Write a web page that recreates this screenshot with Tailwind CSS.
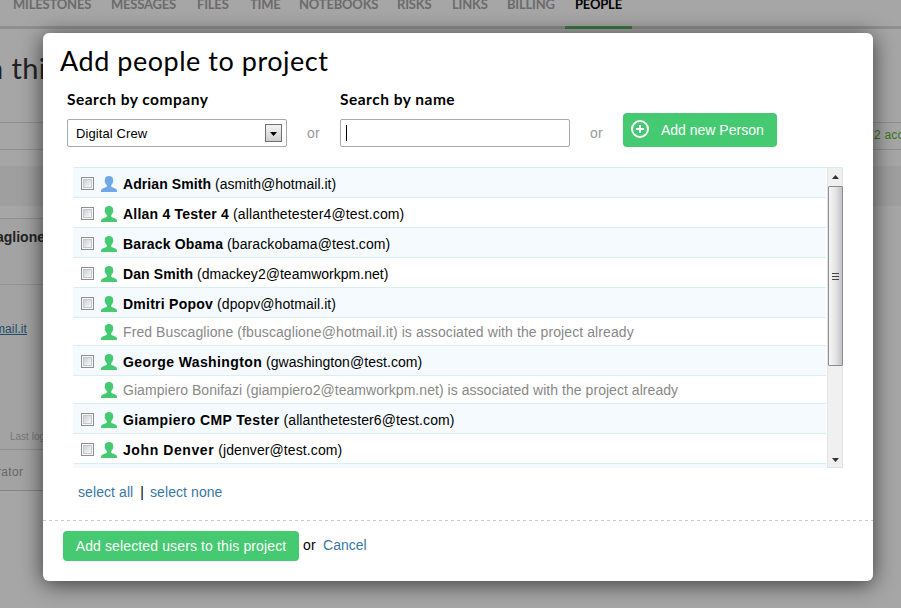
<!DOCTYPE html>
<html lang="en">
<head>
<meta charset="utf-8">
<title>Add people to project</title>
<script src="https://cdn.jsdelivr.net/npm/@tailwindcss/browser@4"></script>
</head>
<body class="relative h-[608px] w-[901px] overflow-hidden bg-[#a6a6a6] font-['Liberation_Sans',sans-serif] text-black">

<!-- Page behind the dialog -->
<div class="h-full w-full overflow-hidden">
  <nav class="flex h-[29px] border-b-[3px] border-[#8f8f8f] pl-[13px] font-['Lato',sans-serif] text-[13px] font-bold leading-[16px] tracking-[-0.2px] text-[#6b6b6b]">
    <span class="-mt-1 w-[98px] whitespace-nowrap">MILESTONES</span>
    <span class="-mt-1 w-[86px] whitespace-nowrap">MESSAGES</span>
    <span class="-mt-1 w-[53px] whitespace-nowrap">FILES</span>
    <span class="-mt-1 w-[49px] whitespace-nowrap">TIME</span>
    <span class="-mt-1 w-[98px] whitespace-nowrap">NOTEBOOKS</span>
    <span class="-mt-1 w-[55px] whitespace-nowrap">RISKS</span>
    <span class="-mt-1 w-[55px] whitespace-nowrap">LINKS</span>
    <span class="-mt-1 w-[58px] whitespace-nowrap">BILLING</span>
    <div class="h-[29px] w-[67px] border-b-[3px] border-[#3e7842] pl-[10px] text-black"><span class="-mt-1 block">PEOPLE</span></div>
  </nav>
  <div class="flex h-[93px] pt-[21px]">
    <div class="-ml-[13px] whitespace-nowrap font-['Lato',sans-serif] text-[29px] leading-[36px] tracking-[0.4px] text-[#222]">n this project</div>
  </div>
  <div class="h-[28px] border-y border-[#8f8f8f]"></div>
  <div class="h-[16px]"></div>
  <div class="h-[40px] bg-[#9f9f9f]"></div>
  <div class="mt-[12px] h-[273px] w-[300px] overflow-hidden border-y border-[#8f8f8f] border-b-[#858585] bg-[#a3a3a3]">
    <div class="h-[66px] border-b border-[#929292] pt-[10px]"><div class="-ml-[4px] text-[14px] font-bold leading-[16px] text-[#222]">aglione</div></div>
    <div class="flex h-[165px] flex-col justify-between border-b border-[#8f8f8f] pb-[6px] pt-[37px]">
      <div class="-ml-[5px] text-[12px] leading-[15px] tracking-[0.1px] text-[#1f4a68] underline">mail.it</div>
      <div class="ml-[10px] text-[10px] leading-[12px] text-[#777]">Last login</div>
    </div>
    <div class="-ml-[3px] pt-[15px] text-[12px] leading-[15px] tracking-[0.3px] text-[#666]">rator</div>
  </div>
</div>
<div class="absolute left-[874px] top-[128px] whitespace-nowrap text-[12px] leading-[15px] tracking-[0.2px] text-[#3b7420]">2 accounts</div>

<!-- Dialog -->
<main class="absolute left-[43px] top-[33px] flex h-[548px] w-[830px] flex-col rounded-[6px] bg-white shadow-[0_3px_22px_rgba(0,0,0,0.65)]">
  <h1 class="ml-[17px] mt-[11px] h-[35px] whitespace-nowrap font-['Lato',sans-serif] text-[27px] leading-[34px] tracking-[0.53px]">Add people to project</h1>
  <div class="flex h-[68px] pl-[24px] pt-[12px]">
    <div class="w-[220px]">
      <div class="-mt-px h-[29px] whitespace-nowrap font-['Lato',sans-serif] text-[15.5px] font-bold leading-[18px] tracking-[0.5px]">Search by company</div>
      <div class="flex h-[28px] items-center justify-between rounded-[2px] border border-[#a9a9a9] pl-[8px] pr-[4px] text-[13px]">
        <span class="mt-[2px] tracking-[0.1px]">Digital Crew</span>
        <span class="flex h-[18px] w-[17px] items-center justify-center border border-[#707070] bg-linear-to-b from-[#f4f4f4] to-[#cfcfcf]">
          <svg class="mt-[2px] h-[4px] w-[7px]" viewBox="0 0 7 4"><path d="M0 0h7L3.5 4z"/></svg>
        </span>
      </div>
    </div>
    <div class="w-[53px] pt-[34px] text-center text-[14px] leading-[16px] tracking-[0.3px] text-[#999]">or</div>
    <div class="w-[230px]">
      <div class="-mt-px h-[29px] whitespace-nowrap font-['Lato',sans-serif] text-[15.5px] font-bold leading-[18px] tracking-[0.5px]">Search by name</div>
      <div class="flex h-[28px] items-center rounded-[2px] border border-[#a9a9a9] pl-[5px]"><span class="h-[16px] w-px bg-black"></span></div>
    </div>
    <div class="w-[53px] pt-[34px] text-center text-[14px] leading-[16px] tracking-[0.3px] text-[#999]">or</div>
    <div class="mt-[22px] flex h-[34px] w-[154px] items-center rounded-[4px] bg-[#45c971] pl-[8px] text-white">
      <svg class="-mt-[2px] h-[18px] w-[18px]" viewBox="0 0 18 18" fill="none" stroke="#fff" stroke-width="2"><circle cx="9" cy="9" r="8"/><path d="M9 5v8M5 9h8"/></svg>
      <span class="ml-[12px] mt-px whitespace-nowrap text-[14px]">Add new Person</span>
    </div>
  </div>

  <div class="ml-[30px] mt-[20px] flex h-[301px] w-[770px] overflow-hidden border-t border-[#d9edf5]">
    <ul id="people" class="mr-px w-[753px] text-[14px] leading-[19px]"></ul>
    <div class="flex h-[300px] w-[16px] flex-col items-center border-x border-b border-[#e3e3e3] bg-[#f0f0f0]">
      <svg class="mt-[7px] h-[4px] w-[7px]" viewBox="0 0 7 4"><path fill="#333" d="M0 4h7L3.5 0z"/></svg>
      <div class="mt-[7px] flex h-[180px] w-[15px] shrink-0 flex-col items-center justify-center gap-[2px] rounded-[1px] border border-[#8c8c8c] bg-linear-to-r from-[#f6f6f6] via-[#e4e4e6] to-[#c3c3c8]">
        <span class="h-px w-[7px] bg-[#444]"></span><span class="h-px w-[7px] bg-[#444]"></span><span class="h-px w-[7px] bg-[#444]"></span>
      </div>
      <svg class="mt-[92px] h-[4px] w-[7px]" viewBox="0 0 7 4"><path fill="#333" d="M0 0h7L3.5 4z"/></svg>
    </div>
  </div>

  <div class="ml-[35px] mt-[16px] flex h-[36px] text-[14px] leading-[16px] tracking-[0.08px] text-[#3a779f]">
    <span>select all</span><span class="ml-[7px] mr-[6px] text-black">|</span><span>select none</span>
  </div>
  <svg class="h-px w-[830px] shrink-0" viewBox="0 0 830 1"><path d="M0 .5h830" stroke="#c8c8c8" stroke-dasharray="3 3"/></svg>
  <div class="ml-[20px] mt-[10px] flex h-[30px] text-[14px] leading-[16px]">
    <div class="flex w-[236px] items-center justify-center whitespace-nowrap rounded-[4px] bg-[#45c971] tracking-[0.13px] text-white">Add selected users to this project</div>
    <span class="ml-[4px] mt-[6px] tracking-[0.3px]">or</span><span class="ml-[7px] mt-[6px] text-[#3a779f]">Cancel</span>
  </div>
</main>

<script>
// name, e-mail, already a member, letter spacing of the name, letter spacing of the rest
const people = [
  ['Adrian Smith', 'asmith@hotmail.it', false, 0.08, 0.02],
  ['Allan 4 Tester 4', 'allanthetester4@test.com', false, 0.22, 0.12],
  ['Barack Obama', 'barackobama@test.com', false, 0.17, 0.09],
  ['Dan Smith', 'dmackey2@teamworkpm.net', false, 0.1, 0.02],
  ['Dmitri Popov', 'dpopv@hotmail.it', false, 0.25, 0.07],
  ['Fred Buscaglione', 'fbuscaglione@hotmail.it', true, 0, 0.087],
  ['George Washington', 'gwashington@test.com', false, 0.39, 0.05],
  ['Giampiero Bonifazi', 'giampiero2@teamworkpm.net', true, 0, 0.047],
  ['Giampiero CMP Tester', 'allanthetester6@test.com', false, 0.38, 0.11],
  ['John Denver', 'jdenver@test.com', false, 0.58, 0.1],
];
const box = '<span class="mt-[9px] block h-[13px] w-[13px] border border-[#8e8f8f] bg-[#f6f6f6] p-px"><span class="block h-[9px] w-[9px] border border-[#c4c7cc] bg-linear-to-br from-[#ccd0d5] to-[#f8f8f8]"></span></span>';
document.getElementById('people').innerHTML = people.map(([name, mail, member, nameGap, textGap], i) => `
  <li class="flex items-start whitespace-nowrap border-b border-[#d9edf5] pl-[8px] ${member ? 'h-[28px]' : 'h-[30px]'} ${i % 2 ? 'bg-white' : 'bg-[#f4fafd]'}">
    <span class="w-[20px]">${member ? '' : box}</span>
    <svg class="${member ? 'mt-[6px]' : 'mt-[8px]'} h-[16px] w-[16px]" viewBox="0 0 16 16" fill="${i ? '#45c971' : '#6fa8e8'}"><path d="M8 0C5.300 0 3.900 1.300 3.900 3.500v1c-.4.200-.3 1.300.2 1.700.3 1.300.9 2.200 1.700 2.900v1.700c-.5.900-4 1.300-5 2.300C.2 13.700 0 14.800 0 16h16c0-1.200-.2-2.300-.8-2.900-1-1-4.500-1.400-5-2.300V9.100c.8-.7 1.400-1.600 1.700-2.900.5-.4.6-1.500.2-1.700v-1C12.100 1.300 10.700 0 8 0z"/></svg>
    <span class="ml-[6px] ${member ? 'mt-[5px] text-[#888]' : 'mt-[7px]'}" style="letter-spacing:${textGap}px">${member ? `${name} (${mail}) is associated with the project already` : `<b style="letter-spacing:${nameGap}px">${name}</b> (${mail})`}</span>
  </li>`).join('') + '<li class="h-[4px] bg-[#f4fafd]"></li>';
</script>
</body>
</html>
